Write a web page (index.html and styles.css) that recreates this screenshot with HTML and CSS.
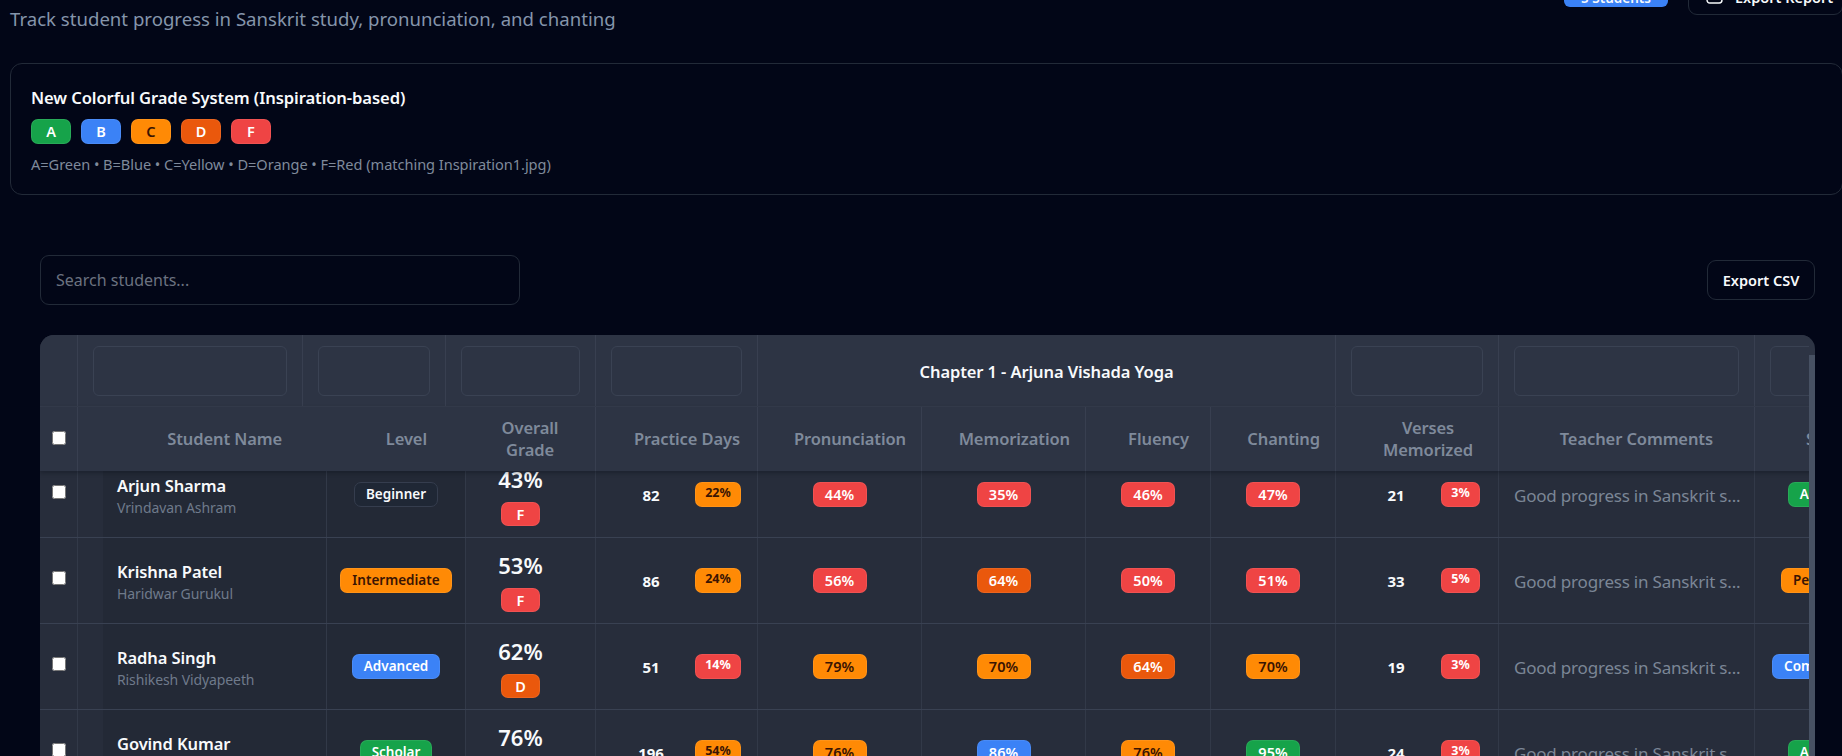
FILE: index.html
```html
<!DOCTYPE html>
<html lang="en">
<head>
<meta charset="utf-8">
<title>Sanskrit Progress Tracking</title>
<link rel="stylesheet" href="styles.css">
</head>
<body>
<main class="page">
  <header class="top">
    <div class="top-text">
      <h1>Sanskrit Progress Tracking</h1>
      <p class="subtitle">Track student progress in Sanskrit study, pronunciation, and chanting</p>
    </div>
    <div class="top-actions">
      <span class="count">5 Students</span>
      <button class="btn btn-report" type="button">
        <svg class="icon" viewBox="0 0 16 16" width="17" height="17" aria-hidden="true"><rect x="1" y="1" width="14" height="14" rx="2.5" fill="none" stroke="currentColor" stroke-width="1.4"/></svg>
        Export Report
      </button>
    </div>
  </header>

  <section class="legend">
    <h2>New Colorful Grade System (Inspiration-based)</h2>
    <div class="legend-badges">
      <span class="badge grade g-a">A</span>
      <span class="badge grade g-b">B</span>
      <span class="badge grade g-c">C</span>
      <span class="badge grade g-d">D</span>
      <span class="badge grade g-f">F</span>
    </div>
    <p>A=Green • B=Blue • C=Yellow • D=Orange • F=Red (matching Inspiration1.jpg)</p>
  </section>

  <section class="panel">
    <div class="tools">
      <input class="search" type="text" placeholder="Search students..." aria-label="Search students">
      <button class="btn btn-csv" type="button">Export CSV</button>
    </div>

    <div class="table-frame">
      <div class="table-clip">
        <div class="row-filter">
          <div class="f-cell"></div>
          <div class="f-cell"><span class="f-box"></span></div>
          <div class="f-cell"><span class="f-box"></span></div>
          <div class="f-cell"><span class="f-box"></span></div>
          <div class="f-cell"><span class="f-box"></span></div>
          <div class="f-cell f-chapter">Chapter 1 - Arjuna Vishada Yoga</div>
          <div class="f-cell"><span class="f-box"></span></div>
          <div class="f-cell"><span class="f-box"></span></div>
          <div class="f-cell"><span class="f-box"></span></div>
        </div>

        <div class="row-head">
          <div class="h-cell h-check"><input type="checkbox" aria-label="Select all"></div>
          <div class="h-cell h-name">Student Name</div>
          <div class="h-cell h-level">Level</div>
          <div class="h-cell h-overall">Overall<br>Grade</div>
          <div class="h-cell h-right18">Practice Days</div>
          <div class="h-cell h-right16">Pronunciation</div>
          <div class="h-cell h-right16">Memorization</div>
          <div class="h-cell h-right22">Fluency</div>
          <div class="h-cell h-right16">Chanting</div>
          <div class="h-cell h-verses">Verses<br>Memorized</div>
          <div class="h-cell h-right42">Teacher Comments</div>
          <div class="h-cell h-status">Status</div>
        </div>

        <div class="body-clip">
          <div class="rows">
            <div class="row">
              <div class="c c-check"><input type="checkbox" aria-label="Select Arjun Sharma"></div>
              <div class="c c-gap"></div>
              <div class="c c-student"><strong>Arjun Sharma</strong><small>Vrindavan Ashram</small></div>
              <div class="c c-level"><span class="badge b-plain">Beginner</span></div>
              <div class="c c-overall"><b>43%</b><span class="badge grade-sm g-f">F</span></div>
              <div class="c c-pair"><span class="num">82</span><span class="badge small wide g-c">22%</span></div>
              <div class="c"><span class="badge pct g-f">44%</span></div>
              <div class="c"><span class="badge pct g-f">35%</span></div>
              <div class="c"><span class="badge pct g-f">46%</span></div>
              <div class="c"><span class="badge pct g-f">47%</span></div>
              <div class="c c-pair c-verses"><span class="num">21</span><span class="badge small g-f">3%</span></div>
              <div class="c c-comment">Good progress in Sanskrit s...</div>
              <div class="c c-status"><span class="badge g-a">Active</span></div>
            </div>
            <div class="row">
              <div class="c c-check"><input type="checkbox" aria-label="Select Krishna Patel"></div>
              <div class="c c-gap"></div>
              <div class="c c-student"><strong>Krishna Patel</strong><small>Haridwar Gurukul</small></div>
              <div class="c c-level"><span class="badge g-c">Intermediate</span></div>
              <div class="c c-overall"><b>53%</b><span class="badge grade-sm g-f">F</span></div>
              <div class="c c-pair"><span class="num">86</span><span class="badge small wide g-c">24%</span></div>
              <div class="c"><span class="badge pct g-f">56%</span></div>
              <div class="c"><span class="badge pct g-d">64%</span></div>
              <div class="c"><span class="badge pct g-f">50%</span></div>
              <div class="c"><span class="badge pct g-f">51%</span></div>
              <div class="c c-pair c-verses"><span class="num">33</span><span class="badge small g-f">5%</span></div>
              <div class="c c-comment">Good progress in Sanskrit s...</div>
              <div class="c c-status"><span class="badge g-c">Pending</span></div>
            </div>
            <div class="row">
              <div class="c c-check"><input type="checkbox" aria-label="Select Radha Singh"></div>
              <div class="c c-gap"></div>
              <div class="c c-student"><strong>Radha Singh</strong><small>Rishikesh Vidyapeeth</small></div>
              <div class="c c-level"><span class="badge g-b">Advanced</span></div>
              <div class="c c-overall"><b>62%</b><span class="badge grade-sm g-d">D</span></div>
              <div class="c c-pair"><span class="num">51</span><span class="badge small wide g-f">14%</span></div>
              <div class="c"><span class="badge pct g-c">79%</span></div>
              <div class="c"><span class="badge pct g-c">70%</span></div>
              <div class="c"><span class="badge pct g-d">64%</span></div>
              <div class="c"><span class="badge pct g-c">70%</span></div>
              <div class="c c-pair c-verses"><span class="num">19</span><span class="badge small g-f">3%</span></div>
              <div class="c c-comment">Good progress in Sanskrit s...</div>
              <div class="c c-status"><span class="badge g-b">Completed</span></div>
            </div>
            <div class="row">
              <div class="c c-check"><input type="checkbox" aria-label="Select Govind Kumar"></div>
              <div class="c c-gap"></div>
              <div class="c c-student"><strong>Govind Kumar</strong><small>Mathura Pathshala</small></div>
              <div class="c c-level"><span class="badge g-a">Scholar</span></div>
              <div class="c c-overall"><b>76%</b><span class="badge grade-sm g-c">C</span></div>
              <div class="c c-pair"><span class="num">196</span><span class="badge small wide g-c">54%</span></div>
              <div class="c"><span class="badge pct g-c">76%</span></div>
              <div class="c"><span class="badge pct g-b">86%</span></div>
              <div class="c"><span class="badge pct g-c">76%</span></div>
              <div class="c"><span class="badge pct g-a">95%</span></div>
              <div class="c c-pair c-verses"><span class="num">24</span><span class="badge small g-f">3%</span></div>
              <div class="c c-comment">Good progress in Sanskrit s...</div>
              <div class="c c-status"><span class="badge g-a">Active</span></div>
            </div>
          </div>
        </div>
      </div>
      <div class="scrollbar"></div>
    </div>
  </section>
</main>
</body>
</html>
```

FILE: styles.css
```css
* { box-sizing: border-box; }

html, body {
  margin: 0;
  height: 756px;
  overflow: hidden;
  background: #020617;
}

body {
  font-family: "Noto Sans", "Open Sans", sans-serif;
  color: #f8fafc;
}

.page {
  width: 1853px;
  margin-top: -60px;
  padding: 0 10px;
}

/* Header */
.top {
  display: flex;
  justify-content: space-between;
  align-items: flex-start;
  height: 91px;
  margin-bottom: 32px;
}

.top-text h1 {
  margin: 0;
  height: 44px;
  font-size: 32px;
  line-height: 44px;
  font-weight: 700;
}

.subtitle {
  margin: 20px 0 0;
  font-size: 18.6px;
  line-height: 30px;
  color: #8595ab;
}

.top-actions {
  display: flex;
  align-items: center;
  gap: 20px;
  height: 40px;
  margin-top: 35px;
}

.count {
  display: block;
  width: 104px;
  height: 24px;
  padding-top: 3px;
  border-radius: 6px;
  background: #3b82f6;
  font-size: 13.5px;
  font-weight: 600;
  line-height: 24px;
  text-align: center;
}

.btn {
  height: 40px;
  border: 1px solid #222a38;
  border-radius: 9px;
  background: #020617;
  color: #f8fafc;
  font-family: inherit;
  font-size: 14.5px;
  font-weight: 600;
}

.btn-report {
  display: flex;
  align-items: center;
  gap: 12px;
  width: 155px;
  padding: 4px 0 0 17px;
  white-space: nowrap;
}

.btn-csv { width: 108px; padding: 0; }

.icon { flex: none; margin-bottom: 3px; }

/* Legend */
.legend {
  height: 132px;
  padding: 22px 20px 0;
  border: 1px solid #222a38;
  border-radius: 12px;
}

.legend h2 {
  margin: 0;
  font-size: 16.6px;
  line-height: 24px;
  font-weight: 600;
  letter-spacing: -0.1px;
}

.legend-badges {
  display: flex;
  gap: 10px;
  margin-top: 9px;
}

.legend p {
  margin: 10px 0 0;
  font-size: 14.6px;
  line-height: 20px;
  letter-spacing: -0.05px;
  color: #7f8a9b;
}

/* Badges */
.badge {
  display: inline-flex;
  align-items: center;
  justify-content: center;
  flex: none;
  height: 25px;
  padding: 0 11px;
  border: 1px solid rgba(255, 255, 255, 0.08);
  border-radius: 7px;
  font-size: 13.5px;
  font-weight: 600;
  line-height: 1;
  white-space: nowrap;
}

.grade { width: 40px; padding: 0; font-size: 14.5px; }
.grade-sm { width: 39px; height: 24px; padding: 0; margin-top: 9px; font-size: 14.5px; }
.pct { min-width: 54px; font-size: 14.5px; }
.small { min-width: 39px; padding: 0 8px 3px; font-size: 12.5px; font-weight: 700; }
.wide { min-width: 46px; }

.g-a { background: #16a34a; color: #fff; }
.g-b { background: #3b82f6; color: #fff; }
.g-c { background: #ff8a05; color: #3a1403; }
.g-d { background: #ea580c; color: #fff; }
.g-f { background: #ef4444; color: #fff; }
.b-plain { background: #1f2735; border-color: #353d4e; color: #f8fafc; }

/* Tools */
.panel { padding: 60px 28px 0 30px; }

.tools {
  display: flex;
  align-items: center;
  justify-content: space-between;
  margin-bottom: 30px;
}

.search {
  width: 480px;
  height: 50px;
  padding: 0 15px;
  border: 1px solid #222a38;
  border-radius: 9px;
  background: #020617;
  color: #f8fafc;
  font-family: inherit;
  font-size: 16px;
}

.search::placeholder { color: #6b7280; opacity: 1; }

/* Table */
.table-frame {
  display: flex;
  height: 500px;
  border-radius: 14px;
  overflow: hidden;
  background: #2d3444;
}

.table-clip {
  flex: 1;
  min-width: 0;
  overflow: hidden;
}

.scrollbar {
  flex: none;
  width: 6px;
  margin-top: 20px;
  background: #475163;
}

.row-filter,
.row-head,
.row {
  display: grid;
  width: 1880px;
}

.row-filter {
  grid-template-columns: 38px 225px 143px 150px 162px 578px 163px 256px 165px;
  height: 72px;
  background: #2d3444;
  border-bottom: 1px solid #353c4d;
}

.f-cell {
  display: flex;
  align-items: center;
  padding: 0 15px;
  border-right: 1px solid #383f50;
}

.f-box {
  display: block;
  width: 100%;
  height: 50px;
  border: 1px solid #3a4253;
  border-radius: 6px;
}

.f-chapter {
  justify-content: center;
  padding-top: 2px;
  font-size: 16.5px;
  font-weight: 600;
  letter-spacing: -0.1px;
}

.row-head {
  position: relative;
  z-index: 2;
  grid-template-columns: 38px 249px 138px 131px 162px 164px 164px 125px 125px 163px 256px 165px;
  height: 64px;
  background: #2d3444;
  box-shadow: 0 2px 4px rgba(10, 14, 24, 0.35);
}

.h-cell {
  display: flex;
  align-items: center;
  justify-content: flex-end;
  border-right: 1px solid #383f50;
  color: #7f8a9b;
  font-size: 16.5px;
  font-weight: 600;
  line-height: 22px;
  letter-spacing: -0.1px;
  text-align: center;
}

.h-check { justify-content: center; }
.h-check input { width: 14px; height: 14px; margin: 0 0 2px; }
.h-name { padding-right: 45px; border-right: 0; }
.h-level { padding-right: 38px; border-right: 0; }
.h-overall { justify-content: center; }
.h-right18 { padding-right: 17px; }
.h-right16 { padding-right: 15px; }
.h-right22 { padding-right: 21px; }
.h-right42 { padding-right: 41px; }
.h-verses { padding-right: 25px; }
.h-status { justify-content: flex-start; padding-left: 51px; border-right: 0; }

.body-clip { overflow: hidden; }
.rows { margin-top: -19px; }

.row {
  grid-template-columns: 38px 25px 224px 139px 130px 162px 164px 164px 125px 125px 163px 256px 165px;
  height: 86px;
  background: #272d3b;
  border-bottom: 1px solid #394152;
}

.c {
  display: flex;
  align-items: center;
  justify-content: center;
  border-right: 1px solid #323948;
}

.c-check input { width: 14px; height: 14px; margin: 0 0 6px; }
.c-gap { border-right: 0; }

.c-student {
  flex-direction: column;
  align-items: flex-start;
  padding: 2px 0 0 14px;
  background: #232936;
}

.c-student strong {
  font-size: 16.5px;
  font-weight: 600;
  line-height: 22px;
  letter-spacing: -0.1px;
}

.c-student small {
  margin-top: 2px;
  font-size: 14px;
  line-height: 18px;
  letter-spacing: -0.1px;
  color: #6f7a8b;
}

.c-level { background: #232936; }

.c-overall {
  flex-direction: column;
  padding: 3px 20px 0 0;
}

.c-overall b {
  font-size: 22px;
  font-weight: 600;
  line-height: 27px;
}

.c-pair {
  justify-content: space-between;
  padding: 0 16px 0 35px;
}

.c-verses { padding-left: 40px; padding-right: 18px; }

.num {
  width: 40px;
  padding-top: 1px;
  font-size: 15px;
  font-weight: 700;
  text-align: center;
}

.c-comment {
  justify-content: flex-start;
  padding: 2px 0 0 15px;
  white-space: nowrap;
  font-size: 17px;
  letter-spacing: -0.2px;
  color: #7b8696;
}

.c-status { padding-right: 35px; border-right: 0; font-size: 14px; }
```
